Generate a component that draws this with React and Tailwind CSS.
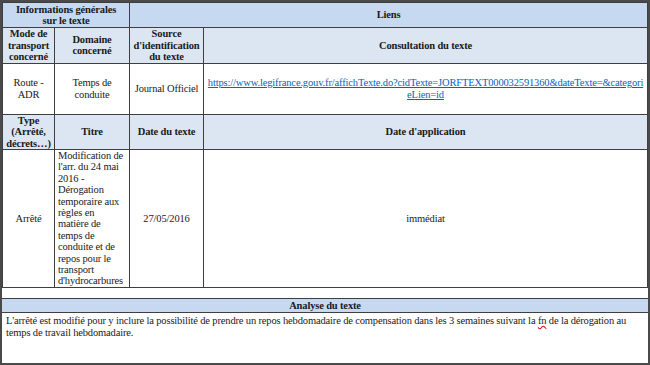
import React from "react";

const font = { fontFamily: '"Liberation Serif", "Times New Roman", serif' };

export default function App() {
  const th = "border border-[#3f3f3f] font-bold text-center align-middle px-[1px] leading-[11.5px] whitespace-nowrap";
  const td = "border border-[#3f3f3f] align-middle px-[3px] leading-[11.4px] whitespace-nowrap";
  return (
    <div
      className="w-[650px] h-[365px] bg-white border-2 border-[#4a4a4a] flex flex-col text-[10.5px] tracking-[-0.15px] text-[#1a1a1a] overflow-hidden"
      style={font}
    >
      <table className="w-full table-fixed border-collapse">
        <colgroup>
          <col className="w-[52px]" />
          <col className="w-[75px]" />
          <col className="w-[74px]" />
          <col />
        </colgroup>
        <tbody>
          <tr className="h-[25px] bg-[#c6d9f1]">
            <th colSpan={2} className={th}>
              Informations générales
              <br />
              sur le texte
            </th>
            <th colSpan={2} className={th}>Liens</th>
          </tr>
          <tr className="h-[35px] bg-[#dce6f2]">
            <th className={th}>
              Mode de
              <br />
              transport
              <br />
              concerné
            </th>
            <th className={th}>
              Domaine
              <br />
              concerné
            </th>
            <th className={th}>
              Source
              <br />
              d'identification
              <br />
              du texte
            </th>
            <th className={th}>Consultation du texte</th>
          </tr>
          <tr className="h-[51px]">
            <td className={td + " text-center"}>
              Route -
              <br />
              ADR
            </td>
            <td className={td + " text-center"}>
              Temps de
              <br />
              conduite
            </td>
            <td className={td + " text-center"}>Journal Officiel</td>
            <td className={td + " text-center px-[2px]"}>
              <a className="text-[#0563c1] underline whitespace-nowrap">
                https://www.legifrance.gouv.fr/affichTexte.do?cidTexte=JORFTEXT000032591360&amp;dateTexte=&amp;categori
                <br />
                eLien=id
              </a>
            </td>
          </tr>
          <tr className="h-[34px] bg-[#dce6f2]">
            <th className={th}>
              Type
              <br />
              (Arrêté,
              <br />
              décrets…)
            </th>
            <th className={th}>Titre</th>
            <th className={th}>Date du texte</th>
            <th className={th}>Date d'application</th>
          </tr>
          <tr className="h-[134px]">
            <td className={td + " text-center"}>Arrêté</td>
            <td className={td + " text-left"}>
              Modification de
              <br />
              l'arr. du 24 mai
              <br />
              2016 -
              <br />
              Dérogation
              <br />
              temporaire aux
              <br />
              règles en
              <br />
              matière de
              <br />
              temps de
              <br />
              conduite et de
              <br />
              repos pour le
              <br />
              transport
              <br />
              d'hydrocarbures
            </td>
            <td className={td + " text-center"}>27/05/2016</td>
            <td className={td + " text-center"}>immédiat</td>
          </tr>
        </tbody>
      </table>
      <div className="h-[10px]" />
      <div className="flex-1 flex flex-col border-t border-[#3f3f3f]">
        <div className="h-[14px] bg-[#c6d9f1] border-b border-[#3f3f3f] font-bold text-center leading-[14px]">
          Analyse du texte
        </div>
        <div className="px-[4px] pt-[2px] leading-[12px] whitespace-nowrap">
          L'arrêté est modifié pour y inclure la possibilité de prendre un repos hebdomadaire de compensation dans les 3 semaines suivant la{" "}
          <span className="underline decoration-wavy decoration-red-600">fn</span> de la dérogation au
          <br />
          temps de travail hebdomadaire.
        </div>
      </div>
    </div>
  );
}
